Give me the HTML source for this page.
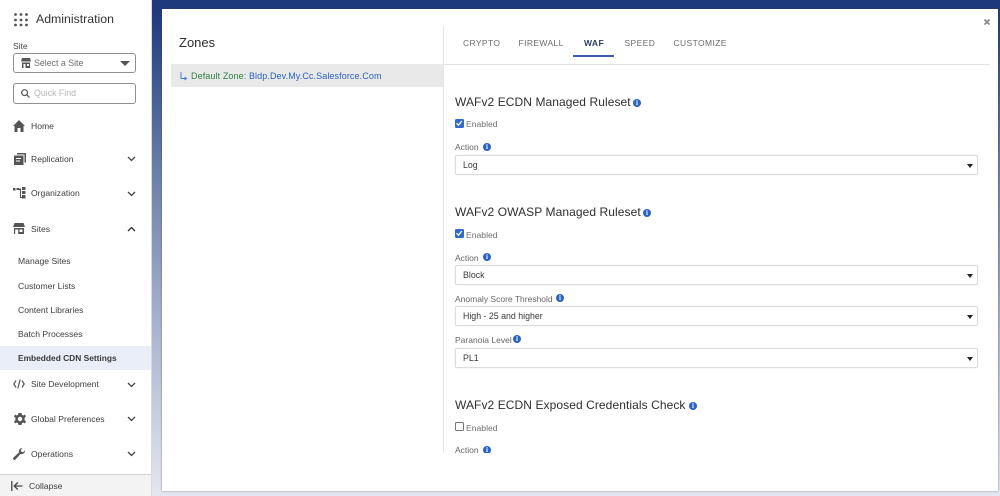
<!DOCTYPE html>
<html><head><meta charset="utf-8"><style>
html,body{margin:0;padding:0}
body{width:1000px;height:496px;position:relative;overflow:hidden;font-family:"Liberation Sans",sans-serif;background:linear-gradient(#1f3a7c 0,#1f3a7c 10px,#6b7ea9 170px,#aab5cf 330px,#e4e7ef 496px);color:#3e3e3c}
.a{position:absolute;white-space:nowrap}
#side{left:0;top:0;width:151px;height:496px;background:#fff;border-right:1px solid #d8dadf;position:absolute}
#modal{position:absolute;left:162px;top:9px;width:836px;height:482px;background:#fff;box-shadow:0 0 2px rgba(60,60,60,.55)}
.nav{font-size:8.6px;color:#3e3e3c;left:31px}
.sub{font-size:8.6px;color:#3e3e3c;left:18px}
.inp{position:absolute;border:1px solid #8f8f8f;border-radius:3px;background:#fff;box-sizing:border-box}
.sel{position:absolute;left:455px;height:20px;border:1px solid #dcdcdc;border-radius:2px;box-sizing:border-box;background:#fff;font-size:8.8px;line-height:19px;padding-left:7px;color:#3a3a3a;box-shadow:0 0 1px #ddd}
.sel:after{content:"";position:absolute;right:4px;top:7.5px;border:3.2px solid transparent;border-top:4px solid #222;border-bottom:0}
.h{font-size:12px;color:#2f2f2f;left:455px;letter-spacing:.08px}
.l{font-size:8.5px;color:#666;left:455px}
.en{font-size:8.6px;color:#707070;left:466px}
.tab{font-size:8.5px;letter-spacing:.38px;color:#6c6c6c;top:38px}
.cb{position:absolute;left:455px;width:8.5px;height:8.5px;border-radius:1.5px;background:#2f6ad0}
.cb svg{position:absolute;left:0;top:0}
.cb.off{background:#fff;border:1px solid #777;box-sizing:border-box;border-radius:1.5px}
svg{position:absolute;overflow:visible}
.i{position:absolute;width:8px;height:8px;border-radius:50%;background:#2b62c4;color:#fff;font:bold 7px/8px "Liberation Serif",serif;text-align:center}
.ch{position:absolute;left:127px}
</style></head><body>
<div id="side"></div>

<!-- waffle -->
<svg style="left:14px;top:13px" width="14" height="14" fill="#555"><g id="w"><circle cx="1.500" cy="1.500" r="1.400"/><circle cx="7" cy="1.500" r="1.400"/><circle cx="12.500" cy="1.500" r="1.400"/><circle cx="1.500" cy="7" r="1.400"/><circle cx="7" cy="7" r="1.400"/><circle cx="12.500" cy="7" r="1.400"/><circle cx="1.500" cy="12" r="1.400"/><circle cx="7" cy="12" r="1.400"/><circle cx="12.500" cy="12" r="1.400"/></g></svg>
<div class="a" style="left:36px;top:12px;font-size:12.3px;color:#333">Administration</div>
<div class="a" style="left:13px;top:41px;font-size:8.5px;color:#444">Site</div>
<div class="inp" style="left:13px;top:53px;width:123px;height:20px"></div>
<svg style="left:21px;top:58px" width="10" height="10" fill="#555"><path d="M1 0h8l1 3.500H0zM1 4.500h8V10H1zM2.500 6v4h2V6zM6 6v2h2V6z" fill-rule="evenodd"/></svg>
<div class="a" style="left:34px;top:58px;font-size:8.8px;color:#707070">Select a Site</div>
<div class="a" style="left:120px;top:61px;border:5px solid transparent;border-top:5px solid #555;border-bottom:0"></div>
<div class="inp" style="left:13px;top:83px;width:123px;height:21px"></div>
<svg style="left:21px;top:89px" width="9" height="9" fill="none" stroke="#555" stroke-width="1.200"><circle cx="3.600" cy="3.600" r="2.900"/><path d="M5.800 5.800L8.500 8.500"/></svg>
<div class="a" style="left:34px;top:88px;font-size:8.8px;color:#b5b5b5">Quick Find</div>

<svg style="left:13px;top:120px" width="12" height="12" fill="#555"><path d="M6 0L12 6H10.500V12H7.500V8H4.500V12H1.500V6H0Z"/></svg>
<div class="a nav" style="top:121px">Home</div>

<svg style="left:14px;top:153px" width="12" height="12" fill="#555"><path d="M3 0h9v9.500h-1.500V1.500H3z"/><path d="M0 2.500h9.500V12H0zM2 5v1h5V5zM2 7.500v1h4v-1z" fill-rule="evenodd"/></svg>
<div class="a nav" style="top:154px">Replication</div>
<svg class="ch" style="top:156px" width="9" height="6" fill="none" stroke="#444" stroke-width="1.300"><path d="M1 1l3.500 3.500L8 1"/></svg>

<svg style="left:13px;top:187px" width="13" height="12" fill="#555"><path d="M0 1h2.500v2.500H0zM3.500 1h2.500v2H3.500zM6 1.500h2V10h1V11H7V3H6zM9 0h3.500v3H9zM9 4h3.500v3H9zM9 8h3.500v3.500H9z"/></svg>
<div class="a nav" style="top:188px">Organization</div>
<svg class="ch" style="top:191px" width="9" height="6" fill="none" stroke="#444" stroke-width="1.300"><path d="M1 1l3.500 3.500L8 1"/></svg>

<svg style="left:13px;top:223px" width="12" height="11" fill="#555"><path d="M1.500 0h9L12 4H0zM1 5h10v6H1zM2.200 6.500V11h3V6.500zM6.500 6.500v2.500h3V6.500z" fill-rule="evenodd"/></svg>
<div class="a nav" style="top:224px">Sites</div>
<svg class="ch" style="top:226px" width="9" height="6" fill="none" stroke="#333" stroke-width="1.300"><path d="M1 5l3.500-3.500L8 5"/></svg>

<div class="a sub" style="top:256px">Manage Sites</div>
<div class="a sub" style="top:281px">Customer Lists</div>
<div class="a sub" style="top:305px">Content Libraries</div>
<div class="a sub" style="top:329px">Batch Processes</div>
<div style="position:absolute;left:0;top:346px;width:151px;height:24px;background:#e9eef9"></div>
<div class="a sub" style="top:353px;font-weight:bold;color:#3a3a3a;font-size:8.4px">Embedded CDN Settings</div>

<svg style="left:13px;top:379px" width="12" height="10" fill="none" stroke="#555" stroke-width="1.200"><path d="M3 1.500L.8 5 3 8.500M9 1.500L11.200 5 9 8.500M7.200 .5L4.800 9.500"/></svg>
<div class="a nav" style="top:379px">Site Development</div>
<svg class="ch" style="top:382px" width="9" height="6" fill="none" stroke="#444" stroke-width="1.300"><path d="M1 1l3.500 3.500L8 1"/></svg>

<svg style="left:14px;top:413px" width="12" height="12" fill="#555"><path d="M4.500 0h3l.4 1.800 1.600.7L11 1.500l1 2-1.400 1.300v2.400L12 8.500l-1 2-1.500-1-1.600.7L7.500 12h-3l-.4-1.800-1.600-.7-1.500 1-1-2 1.400-1.300V4.800L0 3.500l1-2 1.500 1 1.600-.7zM6 3.800a2.200 2.200 0 1 0 0 4.400 2.200 2.200 0 0 0 0-4.400z" fill-rule="evenodd"/></svg>
<div class="a nav" style="top:414px">Global Preferences</div>
<svg class="ch" style="top:416px" width="9" height="6" fill="none" stroke="#444" stroke-width="1.300"><path d="M1 1l3.500 3.500L8 1"/></svg>

<svg style="left:13px;top:448px" width="12" height="12" fill="#555"><path d="M12 2.500A3.500 3.500 0 0 1 7.500 6L2.500 11.500A1.300 1.300 0 0 1 .5 9.500L6 4.500A3.500 3.500 0 0 1 9.500 0L7.800 2l.5 1.700 1.700.5z"/></svg>
<div class="a nav" style="top:449px">Operations</div>
<svg class="ch" style="top:451px" width="9" height="6" fill="none" stroke="#444" stroke-width="1.300"><path d="M1 1l3.500 3.500L8 1"/></svg>

<div style="position:absolute;left:0;top:474px;width:151px;height:22px;background:#f3f3f3;border-top:1px solid #d0d0d0;box-sizing:border-box"></div>
<svg style="left:11px;top:481px" width="12" height="10" fill="none" stroke="#444" stroke-width="1.300"><path d="M.8 0v10M11.500 5H3.500M6.800 1.500L3.200 5l3.600 3.500"/></svg>
<div class="a" style="left:29px;top:481px;font-size:8.6px;color:#3e3e3c">Collapse</div>

<div id="modal"></div>
<svg style="left:984px;top:19px" width="6" height="6" fill="none" stroke="#8a8a8a" stroke-width="1.800"><path d="M.5 .5l5 5M5.500 .5l-5 5"/></svg>

<div class="a" style="left:179px;top:35px;font-size:13px;color:#2f2f2f">Zones</div>
<div style="position:absolute;left:443px;top:26px;width:1px;height:427px;background:#e4e4e4"></div>
<div style="position:absolute;left:171px;top:64px;width:272px;height:23px;background:#e9e9e9"></div>
<svg style="left:180px;top:72px" width="8" height="8" fill="none" stroke="#4a7bd0" stroke-width="1"><path d="M1 0v6.500h5M4.500 5l2 1.500-2 1.500" /></svg>
<div class="a" style="left:191px;top:71px;font-size:9px;color:#2e7d43;letter-spacing:.1px">Default Zone: <span style="color:#2a5fc4">Bldp.Dev.My.Cc.Salesforce.Com</span></div>

<div class="a tab" style="left:463px">CRYPTO</div>
<div class="a tab" style="left:518.500px">FIREWALL</div>
<div class="a tab" style="left:584px;font-weight:bold;color:#2f3f63">WAF</div>
<div class="a tab" style="left:624.500px">SPEED</div>
<div class="a tab" style="left:673.500px">CUSTOMIZE</div>
<div style="position:absolute;left:573px;top:55px;width:41px;height:2px;background:#3b5fa8"></div>
<div style="position:absolute;left:444px;top:64px;width:546px;height:1px;background:#e4e4e4"></div>

<div class="a h" style="top:95px">WAFv2 ECDN Managed Ruleset</div>
<div class="i" style="left:633px;top:99px">i</div>
<div class="cb" style="top:119px"><svg width="8" height="8" fill="none" stroke="#fff" stroke-width="1.300"><path d="M1.500 4.200l2 2L6.800 2"/></svg></div>
<div class="a en" style="top:119px">Enabled</div>
<div class="a l" style="top:142px">Action</div>
<div class="i" style="left:483px;top:143px">i</div>
<div class="sel" style="top:155px;width:523px">Log</div>

<div class="a h" style="top:205px">WAFv2 OWASP Managed Ruleset</div>
<div class="i" style="left:643px;top:209px">i</div>
<div class="cb" style="top:229px"><svg width="8" height="8" fill="none" stroke="#fff" stroke-width="1.300"><path d="M1.500 4.200l2 2L6.800 2"/></svg></div>
<div class="a en" style="top:230px">Enabled</div>
<div class="a l" style="top:253px">Action</div>
<div class="i" style="left:483px;top:253px">i</div>
<div class="sel" style="top:265px;width:523px">Block</div>
<div class="a l" style="top:294px">Anomaly Score Threshold</div>
<div class="i" style="left:556px;top:294px">i</div>
<div class="sel" style="top:306px;width:523px">High - 25 and higher</div>
<div class="a l" style="top:335px">Paranoia Level</div>
<div class="i" style="left:513px;top:335px">i</div>
<div class="sel" style="top:348px;width:523px">PL1</div>

<div class="a h" style="top:398px">WAFv2 ECDN Exposed Credentials Check</div>
<div class="i" style="left:689px;top:402px">i</div>
<div class="cb off" style="top:422px"></div>
<div class="a en" style="top:423px">Enabled</div>
<div class="a l" style="top:445px;height:8px;overflow:hidden">Action</div>
<div style="position:absolute;left:483px;top:446px;width:8px;height:7px;overflow:hidden"><div class="i" style="left:0;top:0">i</div></div>
</body></html>
